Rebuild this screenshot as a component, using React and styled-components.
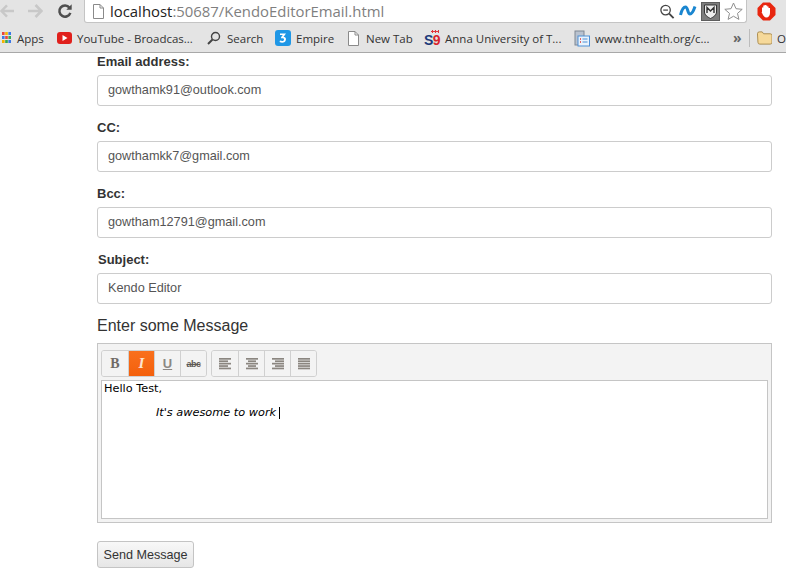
import React from 'react';
import styled, { createGlobalStyle } from 'styled-components';

const GlobalStyle = createGlobalStyle`
    html, body {
        margin: 0;
        padding: 0;
        background: #fff;
        overflow: hidden;
    }
    body {
        font-family: "Liberation Sans", Arial, sans-serif;
        font-size: 14px;
        color: #333;
    }
`;

const Page = styled.div`
    width: 786px;
    height: 583px;
    overflow: hidden;
`;

const Chrome = styled.header`
    height: 53px;
    background: #e4e4e4;
    border-bottom: 1px solid #a8a8a8;
    box-sizing: border-box;
    font-family: "Open Sans", sans-serif;
`;
const TopBar = styled.div`
    height: 24px;
    display: flex;
    align-items: flex-start;
`;
const NavButton = styled.div`
    width: ${props => props.$width}px;
    height: 21px;
    display: flex;
    align-items: center;
    justify-content: center;
    flex-shrink: 0;
`;
const Omnibox = styled.div`
    width: 663px;
    height: 23px;
    margin-left: 11px;
    box-sizing: border-box;
    background: #fff;
    border: 1px solid #c4c4c4;
    border-top: 0;
    border-radius: 0 0 3px 3px;
    display: flex;
    align-items: center;
    padding: 0 3px 0 7px;
    gap: 5px;
`;
const Address = styled.div`
    flex-grow: 1;
    font-size: 14.9px;
    line-height: 20px;
    color: #7f7f7f;
    white-space: nowrap;
`;
const Host = styled.span`
    color: #222;
`;
const OmniIcons = styled.div`
    display: flex;
    align-items: center;
    gap: 4px;
`;
const ExtensionSlot = styled.div`
    flex-grow: 1;
    height: 23px;
    display: flex;
    align-items: center;
    justify-content: center;
`;
const BookmarkBar = styled.nav`
    height: 28px;
    display: flex;
    align-items: center;
    padding-left: 2px;
    font-size: 11.5px;
    color: #333;
`;
const Bookmark = styled.div`
    width: ${props => props.$width}px;
    flex-shrink: 0;
    display: flex;
    align-items: center;
    gap: ${props => props.$gap || 6}px;
    white-space: nowrap;
    overflow: hidden;
`;
const MoreChevron = styled.div`
    width: 16px;
    flex-shrink: 0;
    font-size: 14px;
    font-weight: 700;
    color: #666;
    line-height: 14px;
`;
const BarDivider = styled.div`
    width: 1px;
    height: 18px;
    background: #bcbcbc;
    flex-shrink: 0;
    margin-right: 7px;
`;
const S9Mark = styled.span`
    position: relative;
    width: 16px;
    height: 17px;
    padding-top: 3px;
    box-sizing: border-box;
    font-family: "Liberation Sans", sans-serif;
    font-weight: 700;
    font-size: 14px;
    line-height: 14px;
    letter-spacing: -0.5px;
    color: #d8262c;
    &::before {
        content: '';
        position: absolute;
        top: 0;
        left: 7px;
        width: 8px;
        height: 3px;
        background: radial-gradient(circle, #e0353a 55%, transparent 60%) 0 0 / 3px 3px repeat-x;
    }
`;
const S9Blue = styled.span`
    color: #1d3a7a;
`;

const Form = styled.form`
    width: 675px;
    margin-left: 97px;
    display: flex;
    flex-direction: column;
`;
const Field = styled.div`
    display: flex;
    flex-direction: column;
    margin-bottom: 13px;
`;
const Label = styled.label`
    height: 22px;
    line-height: 18px;
    font-size: 13px;
    font-weight: 700;
    padding-left: ${props => (props.$nudge ? 1 : 0)}px;
    color: #333;
`;
const Input = styled.input`
    height: 31px;
    box-sizing: border-box;
    padding: 0 10px 2px;
    font-family: inherit;
    font-size: 12.7px;
    color: #555;
    background: #fff;
    border: 1px solid #ccc;
    border-radius: 3px;
    outline: none;
`;
const MessageTitle = styled.div`
    font-size: 16px;
    line-height: 18px;
    color: #333;
    margin-bottom: 8px;
`;
const Editor = styled.div`
    height: 180px;
    box-sizing: border-box;
    background: #f3f3f3;
    border: 1px solid #c5c5c5;
    padding: 6px 3px 3px;
    display: flex;
    flex-direction: column;
    gap: 3px;
`;
const EditorTools = styled.div`
    display: flex;
    gap: 4px;
`;
const ToolGroup = styled.div`
    display: flex;
    border: 1px solid #d0d0d0;
    border-radius: 3px;
    overflow: hidden;
`;
const Tool = styled.div`
    width: 26px;
    height: 25px;
    box-sizing: border-box;
    display: flex;
    align-items: center;
    justify-content: center;
    font-family: "Liberation Serif", serif;
    font-size: 14px;
    font-weight: 700;
    color: ${props => (props.$active ? '#fff' : '#6f6a66')};
    background: ${props => (props.$active ? 'linear-gradient(#f9701d, #f4600c)' : '#f3f3f3')};
    & + & {
        border-left: 1px solid #d0d0d0;
    }
`;
const ToolItalic = styled.span`
    font-style: italic;
    font-size: 15px;
    color: #fde3d0;
`;
const ToolUnderline = styled.span`
    text-decoration: underline;
    font-family: "Liberation Sans", sans-serif;
    font-size: 13px;
    color: #8c8884;
`;
const ToolStrike = styled.span`
    text-decoration: line-through;
    font-family: "Liberation Sans", sans-serif;
    font-size: 9px;
    letter-spacing: -0.5px;
    color: #5f5a56;
`;
const EditorBody = styled.div`
    flex-grow: 1;
    box-sizing: border-box;
    background: #fff;
    border: 1px solid #c5c5c5;
    padding: 1px 2px 0;
    font-family: "DejaVu Sans", Verdana, sans-serif;
    font-size: 11.3px;
    line-height: 14px;
    color: #000;
`;
const EditorLine = styled.div`
    height: 24px;
`;
const EditorQuote = styled.div`
    padding-left: 52px;
    font-style: italic;
    display: flex;
    align-items: center;
    height: 14px;
`;
const Caret = styled.span`
    width: 1px;
    height: 12px;
    margin-left: 3px;
    background: #000;
`;
const SendButton = styled.button`
    width: 97px;
    height: 27px;
    margin-top: 18px;
    padding: 0;
    font-family: inherit;
    font-size: 12.6px;
    color: #333;
    background: linear-gradient(#f8f8f8, #e6e6e6);
    border: 1px solid #c4c4c4;
    border-radius: 3px;
`;

const BackIcon = ({ flip }) => (
    <svg width="15" height="14" viewBox="0 0 15 14" style={flip ? { transform: 'scaleX(-1)' } : undefined}>
        <path d="M7.500 1 1.500 7l6 6M2 7h13" fill="none" stroke="#c8c8c8" strokeWidth="2.6" />
    </svg>
);
const ReloadIcon = () => (
    <svg width="16" height="16" viewBox="0 0 18 18">
        <path d="M14 5.200A6.300 6.300 0 1 0 15 11" fill="none" stroke="#4e4e4e" strokeWidth="2.8" />
        <path d="M10.500 7.500H16.500V1.500Z" fill="#4e4e4e" />
    </svg>
);
const PageIcon = ({ size = 15 }) => (
    <svg width={size - 2} height={size} viewBox="0 0 13 15">
        <path d="M1.500.5h6.500l3.500 3.500v10.500h-10Z" fill="#fff" stroke="#8a8a8a" />
        <path d="M8 .5v3.500h3.500" fill="none" stroke="#8a8a8a" />
    </svg>
);
const ZoomIcon = () => (
    <svg width="16" height="17" viewBox="0 0 17 17">
        <circle cx="7" cy="7" r="5" fill="none" stroke="#444" strokeWidth="1.4" />
        <path d="M4.500 7h5" stroke="#444" strokeWidth="1.300" />
        <path d="M10.800 10.800 15.500 15.500" stroke="#444" strokeWidth="2" />
    </svg>
);
const WaveIcon = () => (
    <svg width="18" height="12" viewBox="0 0 18 12">
        <path d="M1.500 10C3 4 5 2 6.500 2 9 2 8.500 9 11 9c2 0 3.500-3 5-7.500" fill="none" stroke="#1a86d0" strokeWidth="3" />
    </svg>
);
const ShieldIcon = () => (
    <svg width="19" height="19" viewBox="0 0 19 19">
        <rect x=".5" y=".5" width="18" height="18" fill="#7d7d7d" stroke="#5e5e5e" />
        <path d="M3.500 3h12v7c0 3-3 5-6 6.500-3-1.500-6-3.500-6-6.500Z" fill="#eee" stroke="#333" />
        <path d="M6 11V5.500l3.500 3.500L13 5.500V11" fill="none" stroke="#333" strokeWidth="1.400" />
    </svg>
);
const StarIcon = () => (
    <svg width="19" height="18" viewBox="0 0 19 18">
        <path d="M9.500 1l2.500 5.700 6.200.6-4.700 4.100 1.400 6-5.400-3.200-5.400 3.200 1.400-6L.8 7.300l6.200-.6Z" fill="#fff" stroke="#8f8f8f" />
    </svg>
);
const StopIcon = () => (
    <svg width="19" height="19" viewBox="0 0 19 19">
        <path d="M6 .5h7L18.500 6v7L13 18.500H6L.5 13V6Z" fill="#e8260f" />
        <path d="M5 10V5.500h1.300V3.500h1.300V3h1.300v.5h1.300V4.500h1.300V6h1.500v5c0 2.500-1.500 4.500-3.700 4.500-2 0-3.200-2-4.800-5.500Z" fill="#fff" />
    </svg>
);
const AppsIcon = () => {
    const colors = ['#e8453c', '#f4b400', '#3b78e7', '#3b78e7', '#e8453c', '#34a853', '#f4b400', '#34a853', '#3b78e7'];
    return (
        <svg width="9" height="12" viewBox="0 0 9 12">
            {colors.map((color, i) => (
                <rect key={i} x={(i % 3) * 3.2} y={Math.floor(i / 3) * 4} width="2.600" height="3" fill={color} />
            ))}
        </svg>
    );
};
const YouTubeIcon = () => (
    <svg width="15" height="12" viewBox="0 0 15 12">
        <rect width="15" height="12" rx="3" fill="#e0201c" />
        <path d="M5.500 3v6l5-3Z" fill="#fff" />
    </svg>
);
const SearchIcon = () => (
    <svg width="14" height="14" viewBox="0 0 14 14">
        <circle cx="8.500" cy="5.500" r="4" fill="none" stroke="#444" strokeWidth="1.400" />
        <path d="M5.500 8.500 1 13" stroke="#444" strokeWidth="2" />
    </svg>
);
const EmpireIcon = () => (
    <svg width="16" height="16" viewBox="0 0 16 16">
        <rect width="16" height="16" rx="3" fill="#1f97e6" />
        <path d="M5 3.500h6L8.500 7C11 7 11.500 9 10.500 11 9.500 13 6.500 13 4.500 12l.5-1.500c2 .8 3.700.7 4-.8.200-1-.8-1.500-2.700-1.300L6 7.300 7.800 5H5Z" fill="#fff" />
    </svg>
);
const SiteIcon = () => (
    <svg width="16" height="17" viewBox="0 0 16 17">
        <rect x="1" y="1" width="9" height="14" fill="#b9c2cf" stroke="#7f8794" />
        <rect x="4" y="6" width="11.500" height="10" fill="#eaf3fc" stroke="#4d8fd6" />
        <path d="M6 9h1M6 12h1" stroke="#d33" strokeWidth="1.500" />
        <path d="M8.500 9h5M8.500 12h5" stroke="#4d8fd6" />
    </svg>
);
const FolderIcon = () => (
    <svg width="16" height="14" viewBox="0 0 16 14">
        <path d="M.5 2.500q0-2 2-2h3l1.500 2h7q2 0 2 2v7q0 2-2 2h-11q-2 0-2-2Z" fill="#f6d99a" stroke="#a98a4c" />
    </svg>
);

// the toolbar's align sprites: thick, slightly blurred grey rows
const AlignIcon = ({ rows }) => (
    <svg width="14" height="14" viewBox="0 0 14 14">
        {rows.map(([x, width], i) => (
            <rect key={i} x={x} y={1 + i * 2.4} width={width} height="1.700" fill="#8b8680" />
        ))}
    </svg>
);
const ALIGN_LEFT = [[1, 12], [1, 9], [1, 12], [1, 9], [1, 12]];
const ALIGN_CENTER = [[1, 12], [3, 8], [1, 12], [3, 8], [1, 12]];
const ALIGN_RIGHT = [[1, 12], [4, 9], [1, 12], [4, 9], [1, 12]];
const ALIGN_FULL = [[1, 12], [1, 12], [1, 12], [1, 12], [1, 12]];

const App = () => (
    <Page>
        <GlobalStyle />
        <Chrome>
            <TopBar>
                <NavButton $width={14}><BackIcon /></NavButton>
                <NavButton $width={43}><BackIcon flip /></NavButton>
                <NavButton $width={16}><ReloadIcon /></NavButton>
                <Omnibox>
                    <PageIcon />
                    <Address><Host>localhost</Host>:50687/KendoEditorEmail.html</Address>
                    <OmniIcons>
                        <ZoomIcon />
                        <WaveIcon />
                        <ShieldIcon />
                        <StarIcon />
                    </OmniIcons>
                </Omnibox>
                <ExtensionSlot><StopIcon /></ExtensionSlot>
            </TopBar>
            <BookmarkBar>
                <Bookmark $width={55}><AppsIcon />Apps</Bookmark>
                <Bookmark $width={150} $gap={5}><YouTubeIcon />YouTube - Broadcas...</Bookmark>
                <Bookmark $width={68}><SearchIcon />Search</Bookmark>
                <Bookmark $width={72} $gap={5}><EmpireIcon />Empire</Bookmark>
                <Bookmark $width={77}><PageIcon />New Tab</Bookmark>
                <Bookmark $width={150} $gap={5}><S9Mark><S9Blue>S</S9Blue>9</S9Mark>Anna University of T...</Bookmark>
                <Bookmark $width={159} $gap={5}><SiteIcon />www.tnhealth.org/c...</Bookmark>
                <MoreChevron>»</MoreChevron>
                <BarDivider />
                <Bookmark $width={29} $gap={5}><FolderIcon />O</Bookmark>
            </BookmarkBar>
        </Chrome>
        <Form>
            <Field>
                <Label>Email address:</Label>
                <Input readOnly value="gowthamk91@outlook.com" />
            </Field>
            <Field>
                <Label>CC:</Label>
                <Input readOnly value="gowthamkk7@gmail.com" />
            </Field>
            <Field>
                <Label>Bcc:</Label>
                <Input readOnly value="gowtham12791@gmail.com" />
            </Field>
            <Field>
                <Label $nudge>Subject:</Label>
                <Input readOnly value="Kendo Editor" />
            </Field>
            <MessageTitle>Enter some Message</MessageTitle>
            <Editor>
                <EditorTools>
                    <ToolGroup>
                        <Tool>B</Tool>
                        <Tool $active><ToolItalic>I</ToolItalic></Tool>
                        <Tool><ToolUnderline>U</ToolUnderline></Tool>
                        <Tool><ToolStrike>abc</ToolStrike></Tool>
                    </ToolGroup>
                    <ToolGroup>
                        <Tool><AlignIcon rows={ALIGN_LEFT} /></Tool>
                        <Tool><AlignIcon rows={ALIGN_CENTER} /></Tool>
                        <Tool><AlignIcon rows={ALIGN_RIGHT} /></Tool>
                        <Tool><AlignIcon rows={ALIGN_FULL} /></Tool>
                    </ToolGroup>
                </EditorTools>
                <EditorBody>
                    <EditorLine>Hello Test,</EditorLine>
                    <EditorQuote>It's awesome to work<Caret /></EditorQuote>
                </EditorBody>
            </Editor>
            <SendButton type="button">Send Message</SendButton>
        </Form>
    </Page>
);

export default App;
